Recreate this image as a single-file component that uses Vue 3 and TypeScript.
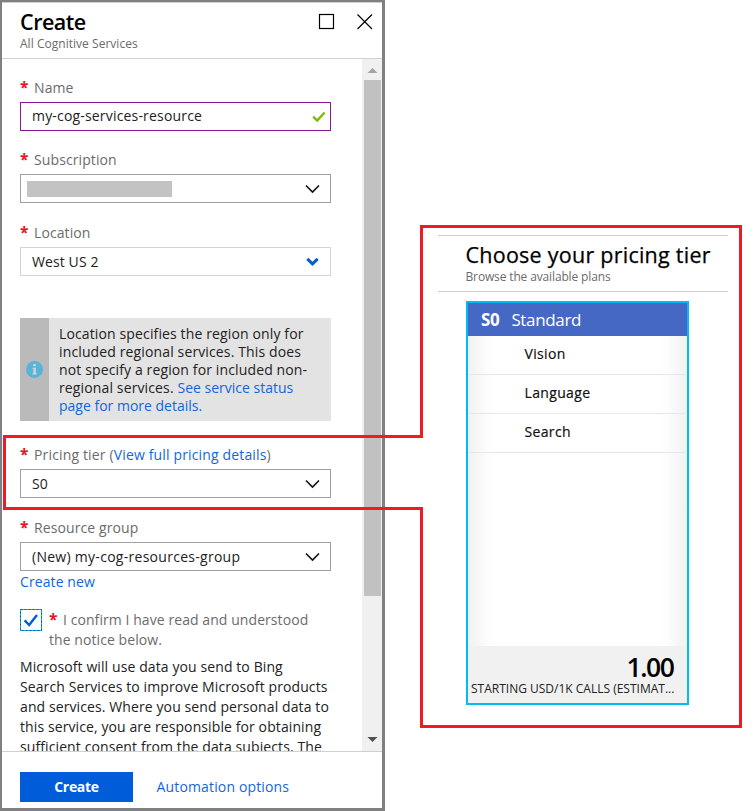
<script setup lang="ts">
interface Plan {
  code: string
  name: string
  features: string[]
  price: string
  unit: string
}

const plan: Plan = {
  code: 'S0',
  name: 'Standard',
  features: ['Vision', 'Language', 'Search'],
  price: '1.00',
  unit: 'STARTING USD/1K CALLS (ESTIMAT...',
}

const regionNote: string[] = [
  'Location specifies the region only for',
  'included regional services. This does',
  'not specify a region for included non-',
]

const terms: string[] = [
  'Microsoft will use data you send to Bing',
  'Search Services to improve Microsoft products',
  'and services. Where you send personal data to',
  'this service, you are responsible for obtaining',
  'sufficient consent from the data subjects. The',
]
</script>

<template>
  <main class="page">
    <section class="blade">
      <header class="blade-header">
        <div class="titles">
          <h1>Create</h1>
          <p>All Cognitive Services</p>
        </div>
        <svg class="window-icons" width="56" height="18" viewBox="0 0 56 18">
          <rect x="1.5" y="1.5" width="14" height="14" />
          <path d="M39.5 1.5L54 16M54 1.5L39.5 16" />
        </svg>
      </header>

      <div class="blade-body">
        <form class="form" @submit.prevent>
          <div class="field">
            <div class="label"><b>*</b><span>Name</span></div>
            <div class="box valid">
              <span class="t-name">my-cog-services-resource</span>
              <svg class="tick" width="14" height="12" viewBox="0 0 14 12"><path d="M1.2 5.6L5.2 9.6L12.6 1.4" /></svg>
            </div>
          </div>

          <div class="field">
            <div class="label"><b>*</b><span>Subscription</span></div>
            <div class="box redacted">
              <span class="mask"></span>
              <svg class="chev" width="16" height="10" viewBox="0 0 16 10"><path d="M1 1.5L7.5 8L14 1.5" /></svg>
            </div>
          </div>

          <div class="field location">
            <div class="label"><b>*</b><span>Location</span></div>
            <div class="box soft">
              <span>West US 2</span>
              <svg class="chev blue" width="16" height="10" viewBox="0 0 16 10"><path d="M2.3 1.8L7.5 6.8L12.7 1.8" /></svg>
            </div>
          </div>

          <div class="notice">
            <div class="notice-icon">
              <svg width="17" height="17" viewBox="0 0 17 17">
                <circle cx="8.5" cy="8.5" r="8.5" fill="#59b4d9" />
                <path d="M7.3 3h2.5v2.2H7.3zM6.6 6.7h3.2v5.6h.9v1.1H6.4v-1.1h1V7.8h-.8z" fill="#d5d5d5" />
              </svg>
            </div>
            <div class="notice-text">
              <div v-for="line in regionNote" :key="line">{{ line }}</div>
              <div>regional services. <a>See service status</a></div>
              <div><a>page for more details.</a></div>
            </div>
          </div>

          <div class="field">
            <div class="label"><b>*</b><span class="t-price">Pricing tier (<a>View full pricing details</a>)</span></div>
            <div class="box">
              <span>S0</span>
              <svg class="chev" width="16" height="10" viewBox="0 0 16 10"><path d="M1 1.5L7.5 8L14 1.5" /></svg>
            </div>
          </div>

          <div class="field group">
            <div class="label"><b>*</b><span>Resource group</span></div>
            <div class="box">
              <span class="t-group">(New) my-cog-resources-group</span>
              <svg class="chev" width="16" height="10" viewBox="0 0 16 10"><path d="M1 1.5L7.5 8L14 1.5" /></svg>
            </div>
            <a class="create-new">Create new</a>
          </div>

          <div class="confirm">
            <svg width="22" height="22" viewBox="0 0 22 22">
              <rect x=".5" y=".5" width="21" height="21" fill="#fff" stroke="#00bcf2" />
              <rect x=".5" y=".5" width="21" height="21" fill="none" stroke="#0b5c86" stroke-dasharray="2 2" />
              <path d="M4.6 11.3L9.2 16L17 6" fill="none" stroke="#015cda" stroke-width="2.4" />
            </svg>
            <div class="confirm-text">
              <div><b>*</b><span>I confirm I have read and understood</span></div>
              <div>the notice below.</div>
            </div>
          </div>

          <div class="terms">
            <div v-for="line in terms" :key="line">{{ line }}</div>
          </div>
        </form>

        <div class="scrollbar">
          <svg width="19" height="21" viewBox="0 0 19 21"><path d="M5.5 14L10.5 9L15.5 14z" fill="#a3a3a3" /></svg>
          <div class="thumb"></div>
          <svg class="down" width="19" height="21" viewBox="0 0 19 21"><path d="M5.5 7L10.5 12L15.5 7z" fill="#505050" /></svg>
        </div>
      </div>

      <footer class="blade-footer">
        <button type="button">Create</button>
        <a>Automation options</a>
      </footer>
    </section>

    <section class="pricing">
      <header class="pricing-header">
        <h2>Choose your pricing tier</h2>
        <p>Browse the available plans</p>
      </header>
      <article class="card">
        <div class="card-head"><strong>{{ plan.code }}</strong><span>{{ plan.name }}</span></div>
        <ul>
          <li v-for="feature in plan.features" :key="feature">{{ feature }}</li>
        </ul>
        <div class="card-foot">
          <div class="amount">{{ plan.price }}</div>
          <div class="unit">{{ plan.unit }}</div>
        </div>
      </article>
    </section>

    <svg class="callout" width="756" height="811" viewBox="0 0 756 811">
      <path d="M421.5 226.5H740.5V726.5H421.5V508.5H4.5V436.5H421.5Z" />
    </svg>
  </main>
</template>

<style>
body {
  margin: 0;
  background: #fff;
}
</style>

<style scoped>
* {
  box-sizing: border-box;
}
.page {
  position: relative;
  display: flex;
  width: 756px;
  height: 811px;
  overflow: hidden;
  background: #fff;
  font-family: 'Open Sans', 'Noto Sans', sans-serif;
  font-size: 14px;
  letter-spacing: 0.1px;
  color: #222;
  white-space: nowrap;
}
h1, h2, p, ul {
  margin: 0;
  padding: 0;
  font-weight: 400;
}
a {
  color: #1366dc;
}
svg {
  display: block;
  flex: none;
}
.blade {
  width: 385px;
  height: 811px;
  flex: none;
  display: flex;
  flex-direction: column;
  border: solid #808080;
  border-width: 2px 3px 3px 2px;
}
.blade-header {
  height: 57px;
  flex: none;
  display: flex;
  justify-content: space-between;
  border-top: 1px solid #d0d0d0;
  border-bottom: 1px solid #d0d0d0;
  padding: 5px 8px 0 18px;
}
.blade-header h1 {
  font-size: 21.5px;
  line-height: 28px;
  font-weight: 600;
  letter-spacing: -0.5px;
  color: #000;
}
.blade-header p,
.pricing-header p {
  font-size: 12px;
  line-height: 15px;
  letter-spacing: 0.03px;
  color: #6b6b6b;
}
.pricing-header p {
  letter-spacing: -0.14px;
}
.window-icons {
  margin-top: 5px;
  fill: none;
  stroke: #000;
  stroke-width: 1.2;
}
.blade-body {
  height: 692px;
  flex: none;
  display: flex;
  justify-content: space-between;
  overflow: hidden;
}
.form {
  width: 311px;
  margin-left: 18px;
  padding-top: 19px;
}
.field {
  height: 73px;
}
.field:first-child {
  height: 72px;
}
.label {
  display: flex;
  height: 24px;
  line-height: 20px;
  color: #6b6b6b;
}
.label b,
.confirm-text b {
  width: 14px;
  font-size: 15.5px;
  font-weight: 700;
  line-height: 18px;
  color: #e81123;
}
.box {
  display: flex;
  align-items: center;
  justify-content: space-between;
  height: 29px;
  border: 1px solid #a0a0a0;
  padding: 0 9px 0 11px;
  line-height: 26px;
}
.box.valid {
  border-color: #881798;
  padding-right: 4px;
}
.t-name {
  margin-top: -2px;
  letter-spacing: 0.18px;
}
.t-group {
  letter-spacing: 0.28px;
}
.t-price {
  letter-spacing: 0.15px;
}
.box.soft {
  border-color: #d4d4d4;
}
.box.redacted {
  padding-left: 6px;
}
.mask {
  width: 145px;
  height: 16px;
  background: #c3c3c3;
}
.chev {
  fill: none;
  stroke: #111;
  stroke-width: 1.6;
}
.chev.blue {
  stroke: #015cda;
  stroke-width: 3;
}
.tick {
  fill: none;
  stroke: #7fba00;
  stroke-width: 2.3;
}
.field.location {
  height: 95px;
}
.notice {
  display: flex;
  height: 103px;
  margin-bottom: 24px;
  background: #e3e3e3;
}
.notice-icon {
  display: flex;
  width: 29px;
  align-items: center;
  justify-content: center;
  background: #bababa;
}
.notice-text {
  padding: 7px 0 0 10px;
  line-height: 18px;
  letter-spacing: 0.13px;
}
.notice-text a {
  letter-spacing: 0;
}
.field.group {
  height: 91px;
}
.create-new {
  display: block;
  margin-top: 1px;
  line-height: 20px;
}
.confirm {
  display: flex;
  height: 48px;
}
.confirm-text {
  padding: 1px 0 0 7px;
  line-height: 20px;
  letter-spacing: 0.07px;
  color: #6b6b6b;
}
.confirm-text > div {
  display: flex;
  height: 20px;
}
.terms {
  line-height: 20px;
}
.scrollbar {
  width: 20px;
  padding-right: 1px;
  background: #f0f0f0;
}
.thumb {
  width: 17px;
  height: 516px;
  margin-left: 2px;
  background: #c1c1c1;
}
.down {
  margin-top: 134px;
}
.blade-footer {
  display: flex;
  height: 57px;
  align-items: flex-start;
  border-top: 1px solid #d0d0d0;
  padding: 20px 0 0 18px;
}
.blade-footer button {
  width: 113px;
  height: 30px;
  border: 0;
  padding: 0;
  background: #015cda;
  color: #fff;
  font: 700 14px/28px 'Open Sans', sans-serif;
  letter-spacing: -0.3px;
}
.blade-footer a {
  margin-left: 23.5px;
  line-height: 29px;
  letter-spacing: 0.15px;
}
.pricing {
  width: 290px;
  margin: 235px 0 0 53px;
}
.pricing-header {
  height: 57px;
  border-top: 1px solid #d0d0d0;
  border-bottom: 1px solid #d0d0d0;
  padding: 5px 0 0 27.5px;
}
.pricing-header h2 {
  font-size: 21.5px;
  line-height: 28px;
  letter-spacing: 0.25px;
  color: #000;
  -webkit-text-stroke: 0.25px #000;
}
.card {
  display: flex;
  flex-direction: column;
  width: 223px;
  height: 404px;
  margin: 9px 0 0 28px;
  border: 2px solid #00bcf2;
  background: linear-gradient(90deg, #f1f1f1, #fdfdfd 20px, #fff 32px, #fff 188px, #fdfdfd 199px, #f1f1f1);
}
.card-head {
  display: flex;
  height: 33px;
  flex: none;
  gap: 12px;
  background: #4668c5;
  padding-left: 13px;
  color: #fff;
  font-size: 17px;
  line-height: 33px;
  letter-spacing: -0.35px;
}
.card ul {
  flex: 1;
  margin-right: 1px;
  list-style: none;
}
.card li {
  height: 39px;
  border-bottom: 1px solid #e6e6f3;
  padding-left: 56.5px;
  line-height: 36px;
  letter-spacing: 0.35px;
  color: #111;
  -webkit-text-stroke: 0.2px #111;
}
.card-foot {
  height: 57px;
  background: #f1f1f1;
  padding: 7px 12px 0 3px;
}
.amount {
  margin-right: 1.5px;
  text-align: right;
  font-size: 26.5px;
  line-height: 28px;
  font-weight: 600;
  letter-spacing: -1.4px;
  color: #000;
}
.unit {
  font-size: 12px;
  line-height: 16px;
  letter-spacing: 0;
}
.callout {
  position: absolute;
  left: 0;
  top: 0;
  fill: none;
  stroke: #ed1c24;
  stroke-width: 3;
}
</style>
